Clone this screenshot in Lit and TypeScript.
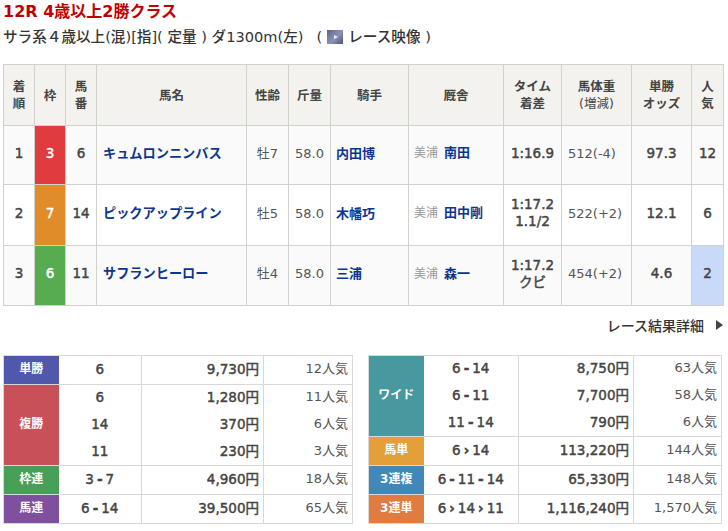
import { LitElement, html, css } from "lit";
import { customElement } from "lit/decorators.js";

const rows = [
  { pos: "1", wk: "3", wc: "w3", no: "6", name: "キュムロンニンバス", sa: "牡7", kg: "58.0", jk: "内田博", tr: "南田", t: ["1:16.9"], wt: "512(-4)", od: "97.3", pop: "12", cls: "odd" },
  { pos: "2", wk: "7", wc: "w7", no: "14", name: "ピックアップライン", sa: "牡5", kg: "58.0", jk: "木幡巧", tr: "田中剛", t: ["1:17.2", "1.1/2"], wt: "522(+2)", od: "12.1", pop: "6", cls: "even" },
  { pos: "3", wk: "6", wc: "w6", no: "11", name: "サフランヒーロー", sa: "牡4", kg: "58.0", jk: "三浦", tr: "森一", t: ["1:17.2", "クビ"], wt: "454(+2)", od: "4.6", pop: "2", cls: "odd", hot: true },
];

const left = [
  { l: "単勝", c: "c-tan", r: [["6", "9,730円", "12人気"]], h: "h1" },
  { l: "複勝", c: "c-fuku", r: [["6", "1,280円", "11人気"], ["14", "370円", "6人気"], ["11", "230円", "3人気"]], h: "h3" },
  { l: "枠連", c: "c-waku", r: [["3 - 7", "4,960円", "18人気"]], h: "h1" },
  { l: "馬連", c: "c-uma", r: [["6 - 14", "39,500円", "65人気"]], h: "h1" },
];
const right = [
  { l: "ワイド", c: "c-wide", r: [["6 - 14", "8,750円", "63人気"], ["6 - 11", "7,700円", "58人気"], ["11 - 14", "790円", "6人気"]], h: "h3" },
  { l: "馬単", c: "c-utan", r: [["6 › 14", "113,220円", "144人気"]], h: "h1" },
  { l: "3連複", c: "c-3f", r: [["6 - 11 - 14", "65,330円", "148人気"]], h: "h1" },
  { l: "3連単", c: "c-3t", r: [["6 › 14 › 11", "1,116,240円", "1,570人気"]], h: "h1" },
];

@customElement("app-root")
export class AppRoot extends LitElement {
  static styles = css`
    :host { display: block; width: 728px; height: 531px; overflow: hidden; background: #fff; font-family: "DejaVu Sans", "Noto Sans CJK JP", sans-serif; color: #333; }
    h1 { margin: 0; padding: 1px 0 0 3px; font-size: 16px; line-height: 22px; font-weight: 700; color: #c00000; }
    .sub { margin: 1px 0 0; padding-left: 3px; height: 26px; font-size: 14.6px; line-height: 24px; color: #333; font-weight: 500; white-space: nowrap; display: flex; align-items: center; }
    .gap { width: 13px; }
    .movie { display: inline-block; width: 16px; height: 14px; margin: 0 5px; background: linear-gradient(135deg, #5a6488, #8c94b4 55%, #4c5478); position: relative; }
    .movie::after { content: ""; position: absolute; left: 7px; top: 5px; border-left: 4px solid #e8ecf8; border-top: 2.5px solid transparent; border-bottom: 2.5px solid transparent; }
    table { border-collapse: collapse; table-layout: fixed; }
    .main { margin: 14px 0 0 3px; width: 720px; }
    .main th, .main td { border: 1px solid #d2d2cc; padding: 0; text-align: center; font-size: 13px; line-height: 17px; }
    .main th { background: #f3f2ee; font-weight: 700; font-size: 12.5px; color: #444; height: 60px; }
    .main th .lt { font-weight: 400; }
    .main tbody tr:nth-child(1) td { height: 59px; }
    .main tbody tr:nth-child(2) td { height: 61px; }
    .main tbody tr:nth-child(3) td { height: 60px; }
    .main tbody td { padding-bottom: 4px; box-sizing: border-box; }
    .odd td { background: #fafafa; }
    .even td { background: #fff; }
    .main td.b { font-size: 13.5px; font-weight: 400; -webkit-text-stroke: 0.45px currentColor; color: #444; }
    .main td.left { text-align: left; padding-left: 5px; }
    .main td.wt { text-align: left; padding-left: 6px; }
    .main td.frame { color: #fff; }
    .odd td.w3 { background: #e03c40; }
    .even td.w7 { background: #e08c28; }
    .odd td.w6 { background: #58ac50; }
    .odd td.hot { background: #c8daf8; }
    a.l { color: #0b3590; font-weight: 700; text-decoration: none; }
    .name { font-size: 13.2px; margin-left: 1px; }
    .muted { color: #555; }
    .tr { color: #999; font-size: 12px; margin-right: 6px; }
    .more { display: flex; justify-content: flex-end; align-items: center; height: 20px; margin-top: 9px; padding-right: 5px; font-size: 14px; font-weight: 500; color: #333; gap: 12px; }
    .arrow { width: 0; height: 0; border-left: 7px solid #444; border-top: 5px solid transparent; border-bottom: 5px solid transparent; }
    .pay { display: flex; margin-top: 20px; padding-left: 3px; }
    .pay table { border: 1px solid #d8d8d8; }
    .pl { width: 349px; }
    .pr { width: 353px; margin-left: 15px; }
    .pay td { padding: 0 0 2px; font-size: 13.5px; line-height: 20px; }
    .pay tbody { border-bottom: 1px solid #d8d8d8; }
    .pay .lab { color: #fff; font-weight: 700; text-align: center; font-size: 12px; }
    .pay .num { text-align: center; font-weight: 400; -webkit-text-stroke: 0.45px currentColor; color: #444; border-right: 1px solid #d8d8d8; }
    .pay .amt { text-align: right; font-weight: 400; -webkit-text-stroke: 0.45px currentColor; color: #444; padding-right: 4px; border-right: 1px solid #d8d8d8; }
    .pay .ninki { text-align: right; font-weight: 400; color: #555; padding-right: 4px; font-size: 13px; }
    .pay tr.h1 td { height: 29px; box-sizing: border-box; }
    .pay tr.h3 td { height: 27px; box-sizing: border-box; }
    .sep { font-weight: 700; margin: 0 3px; }
    .c-tan { background: #5058ac; }
    .c-fuku { background: #c85058; }
    .c-waku { background: #48a058; }
    .c-uma { background: #8050a0; }
    .c-wide { background: #4898a0; }
    .c-utan { background: #e4a038; }
    .c-3f { background: #4088b8; }
    .c-3t { background: #e07c40; }
    .cn { width: 31px; }
    .cm { width: 150px; }
    .cs { width: 42px; }
    .cj { width: 78px; }
    .ct { width: 95px; }
    .cti { width: 58px; }
    .cw { width: 70px; }
    .co { width: 60px; }
    .cp { width: 32px; }
    .l1 { width: 55px; }
    .l2 { width: 83px; }
    .l3 { width: 122px; }
    .l4 { width: 89px; }
    .r1 { width: 55px; }
    .r2 { width: 95px; }
    .r3 { width: 115px; }
    .r4 { width: 88px; }
  `;

  combo(s: string) {
    return s.split(" ").map((t) => (t === "-" || t === "›" ? html`<span class="sep">${t}</span>` : t));
  }

  payTable(cls: string, cols: string[], groups: typeof left) {
    return html`<table class=${cls}>
      <colgroup>${cols.map((c) => html`<col class=${c} />`)}</colgroup>
      ${groups.map(
        (g) => html`<tbody>
          ${g.r.map(
            (r, i) => html`<tr class=${g.h}>
              ${i === 0 ? html`<td class="lab ${g.c}" rowspan=${g.r.length}>${g.l}</td>` : ""}
              <td class="num">${this.combo(r[0])}</td><td class="amt">${r[1]}</td><td class="ninki">${r[2]}</td>
            </tr>`
          )}
        </tbody>`
      )}
    </table>`;
  }

  render() {
    return html`
      <h1>12R 4歳以上2勝クラス</h1>
      <div class="sub">サラ系４歳以上(混)[指]( 定量 ) ダ1300m(左)<span class="gap"></span>(<span class="movie"></span>レース映像 )</div>
      <table class="main">
        <colgroup>
          <col class="cn" /><col class="cn" /><col class="cn" /><col class="cm" /><col class="cs" /><col class="cs" /><col class="cj" /><col class="ct" /><col class="cti" /><col class="cw" /><col class="co" /><col class="cp" />
        </colgroup>
        <thead>
          <tr>
            <th>着<br />順</th><th>枠</th><th>馬<br />番</th><th>馬名</th><th>性齢</th><th>斤量</th><th>騎手</th><th>厩舎</th>
            <th>タイム<br />着差</th><th>馬体重<br /><span class="lt">(増減)</span></th><th>単勝<br />オッズ</th><th>人<br />気</th>
          </tr>
        </thead>
        <tbody>
          ${rows.map(
            (r) => html`<tr class=${r.cls}>
              <td class="b">${r.pos}</td>
              <td class="b frame ${r.wc}">${r.wk}</td>
              <td class="b">${r.no}</td>
              <td class="left"><a class="l name">${r.name}</a></td>
              <td class="muted">${r.sa}</td>
              <td class="muted">${r.kg}</td>
              <td class="left"><a class="l">${r.jk}</a></td>
              <td class="left"><span class="tr">美浦</span><a class="l">${r.tr}</a></td>
              <td class="b">${r.t.map((x, i) => html`${i ? html`<br />` : ""}${x}`)}</td>
              <td class="wt muted">${r.wt}</td>
              <td class="b">${r.od}</td>
              <td class="b ${r.hot ? "hot" : ""}">${r.pop}</td>
            </tr>`
          )}
        </tbody>
      </table>
      <div class="more">レース結果詳細<span class="arrow"></span></div>
      <div class="pay">
        ${this.payTable("pl", ["l1", "l2", "l3", "l4"], left)}
        ${this.payTable("pr", ["r1", "r2", "r3", "r4"], right)}
      </div>
    `;
  }
}
